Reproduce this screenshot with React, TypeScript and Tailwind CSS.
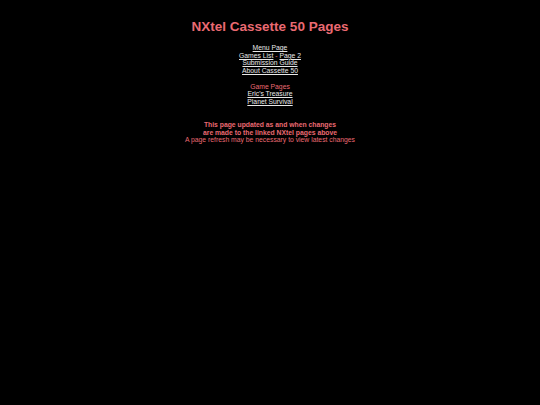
export default function App() {
  return (
    <div className="min-h-[405px] w-[540px] bg-black text-center" style={{ fontFamily: '"Liberation Sans", Arial, sans-serif' }}>
      <div className="pt-[19px]">
        <h1 className="text-[13.5px] font-bold leading-[16px] text-[#ea6a72]">NXtel Cassette 50 Pages</h1>
      </div>
      <div className="mt-[9px] text-[6.8px] leading-[7.7px] text-[#e8e8e8]">
        <div><span className="underline">Menu Page</span></div>
        <div>
          <span className="underline">Games List</span>
          <span className="text-[#ea6a72]"> - </span>
          <span className="underline">Page 2</span>
        </div>
        <div><span className="underline">Submission Guide</span></div>
        <div><span className="underline">About Cassette 50</span></div>
        <div className="h-[7.7px]" />
        <div className="text-[#ea6a72]">Game Pages</div>
        <div><span className="underline">Eric's Treasure</span></div>
        <div><span className="underline">Planet Survival</span></div>
        <div className="h-[15.4px]" />
        <div className="font-bold text-[#ea6a72]">This page updated as and when changes</div>
        <div className="font-bold text-[#ea6a72]">are made to the linked NXtel pages above</div>
        <div className="text-[#ea6a72]">A page refresh may be necessary to view latest changes</div>
      </div>
    </div>
  );
}
